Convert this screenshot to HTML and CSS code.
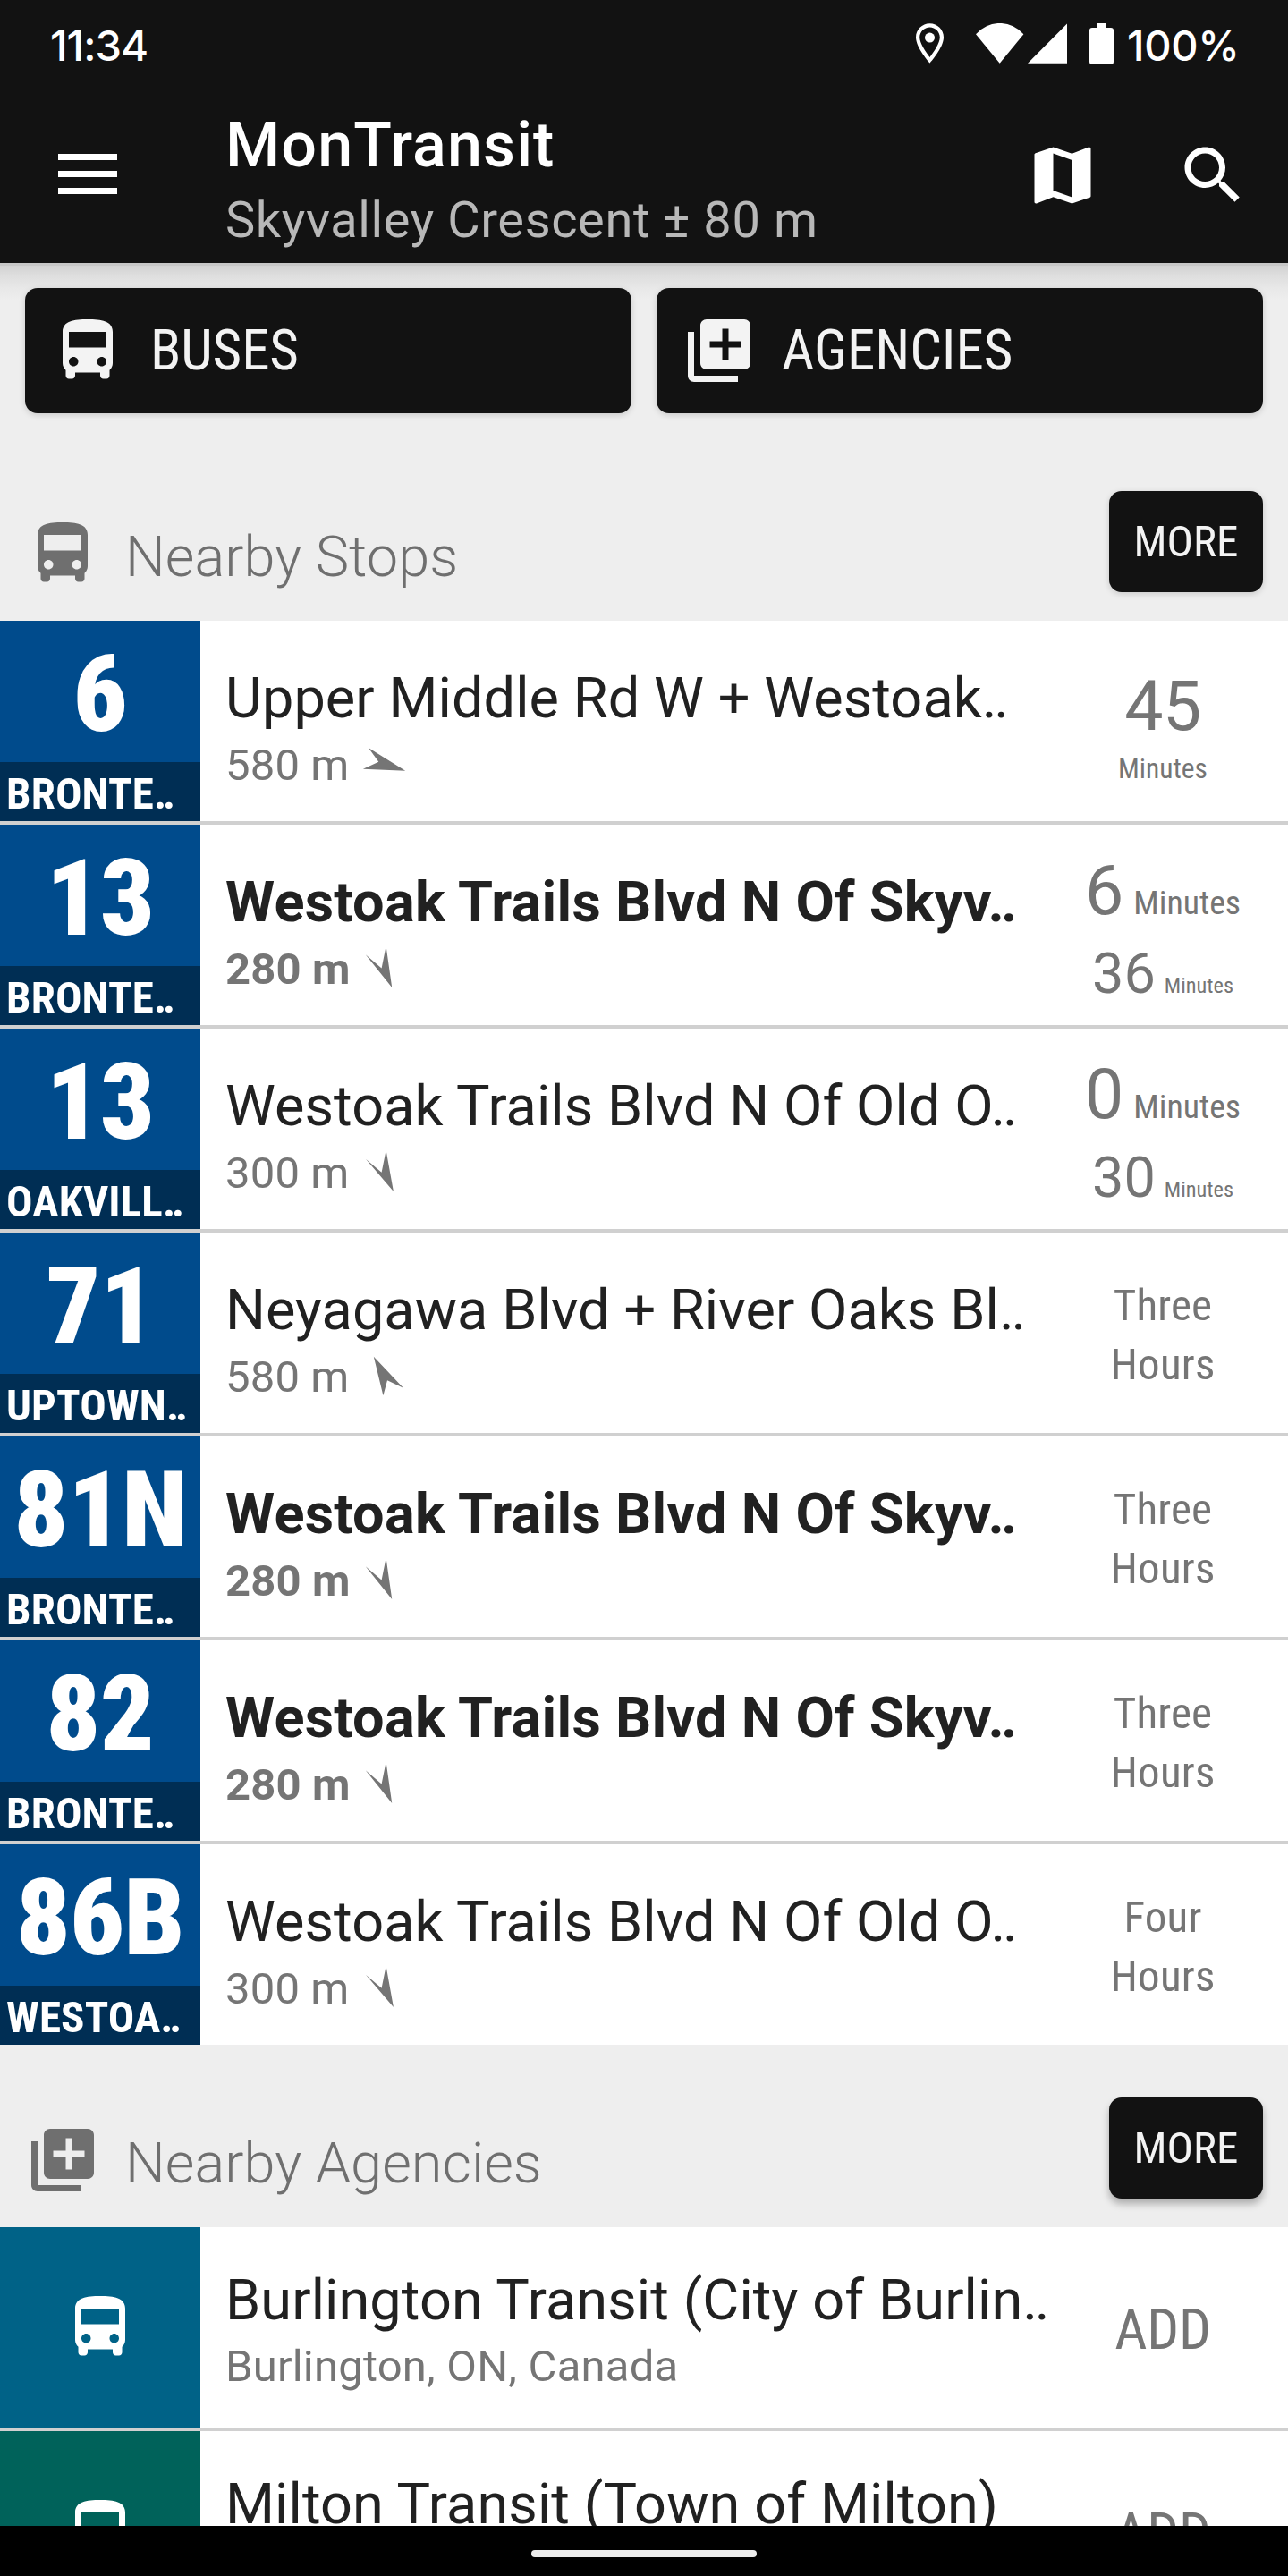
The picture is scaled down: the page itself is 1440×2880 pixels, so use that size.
FILE: index.html
```
<!DOCTYPE html>
<html lang="en">
<head>
<meta charset="utf-8">
<title>MonTransit</title>
<link rel="stylesheet" href="styles.css">
</head>
<body>
<svg class="defs" aria-hidden="true">
  <symbol id="bus" viewBox="0 0 24 24"><path d="M4 16c0 .88.39 1.67 1 2.22V20c0 .55.45 1 1 1h1c.55 0 1-.45 1-1v-1h8v1c0 .55.45 1 1 1h1c.55 0 1-.45 1-1v-1.780c.61-.55 1-1.340 1-2.220V6c0-3.500-3.580-4-8-4s-8 .5-8 4v10zm3.500 1c-.83 0-1.500-.67-1.500-1.500S6.670 14 7.500 14s1.500.67 1.500 1.500S8.330 17 7.500 17zm9 0c-.83 0-1.500-.67-1.500-1.500s.67-1.500 1.500-1.500 1.500.67 1.500 1.500-.67 1.500-1.500 1.500zM18 11H6V6h12v5z"/></symbol>
  <symbol id="library" viewBox="0 0 24 24"><path d="M4 6H2v14c0 1.100.9 2 2 2h14v-2H4V6zm16-4H8c-1.100 0-2 .9-2 2v12c0 1.100.9 2 2 2h12c1.100 0 2-.9 2-2V4c0-1.100-.9-2-2-2zm-1 9h-4v4h-2v-4H9V9h4V5h2v4h4v2z"/></symbol>
  <symbol id="dir-east" viewBox="0 0 56 50"><path d="M11.900 8 53.200 33.700 5.900 31.700 23.300 23.700z"/></symbol>
  <symbol id="dir-south" viewBox="0 0 56 50"><path d="M31.600 1.700 38.200 48 8.700 11.300 26.600 26.400z"/></symbol>
  <symbol id="dir-southeast" viewBox="0 0 56 50"><path d="M31.600 2 39.900 48 9.100 12 26.600 26.700z"/></symbol>
  <symbol id="dir-north" viewBox="0 0 56 50"><path d="M17.800 4.700 50.900 39.700 33 31.300 28.400 48.300z"/></symbol>
</svg>

<header class="top">
  <div class="status">
    <span class="clock">11:34</span>
    <svg class="st-pin" viewBox="5 2 14 20"><path d="M12 2C8.130 2 5 5.130 5 9c0 5.250 7 13 7 13s7-7.750 7-13c0-3.870-3.130-7-7-7zM6.900 9c0-2.820 2.280-5.100 5.100-5.100s5.100 2.280 5.100 5.100c0 2.880-3 7.300-5.100 10C9.920 16.310 6.900 11.850 6.900 9z"/><circle cx="12" cy="9.100" r="2.500"/></svg>
    <svg class="st-wifi" viewBox="0 0 54 45"><path d="M0 12.300A35 35 0 0 1 53.400 12.300L26.700 44.700z"/></svg>
    <svg class="st-cell" viewBox="0 0 44 45"><path d="M0 44.700 44 .5V44.700z"/></svg>
    <svg class="st-battery" viewBox="0 0 27 46"><path d="M8 0h11v5h5a3 3 0 0 1 3 3v35a3 3 0 0 1-3 3H3a3 3 0 0 1-3-3V8a3 3 0 0 1 3-3h5z"/></svg>
    <span class="charge">100%</span>
  </div>
  <div class="appbar">
    <div class="menu"><i></i><i></i><i></i></div>
    <div class="titles">
      <h1>MonTransit</h1>
      <p>Skyvalley Crescent ± 80 m</p>
    </div>
    <svg class="icon act-map" viewBox="0 0 24 24"><path d="M20.500 3l-.16.030L15 5.100 9 3 3.360 4.900c-.21.070-.36.250-.36.480V20.500c0 .28.220.5.5.5l.16-.03L9 18.900l6 2.100 5.640-1.900c.21-.07.360-.25.360-.48V3.500c0-.28-.22-.5-.5-.5zM15 19l-6-2.110V5l6 2.110V19z"/></svg>
    <svg class="icon act-search" viewBox="0 0 24 24"><path d="M15.500 14h-.79l-.28-.27C15.410 12.590 16 11.110 16 9.500 16 5.910 13.090 3 9.500 3S3 5.910 3 9.500 5.910 16 9.500 16c1.610 0 3.090-.59 4.230-1.570l.27.280v.79l5 4.990L20.490 19l-4.990-5zm-6 0C7.010 14 5 11.990 5 9.500S7.010 5 9.500 5 14 7.010 14 9.500 11.990 14 9.500 14z"/></svg>
  </div>
</header>

<main class="content">
  <nav class="modes">
    <a class="mode"><svg class="icon"><use href="#bus"/></svg>BUSES</a>
    <a class="mode"><svg class="icon"><use href="#library"/></svg>AGENCIES</a>
  </nav>

  <div class="section section-first">
    <svg class="icon"><use href="#bus"/></svg>
    <h2>Nearby Stops</h2>
    <a class="more">MORE</a>
  </div>
  <ul class="list">
    <li class="row">
      <div class="badge"><b>6</b><span>BRONTE‥</span></div>
      <div class="body"><p class="name">Upper Middle Rd W + Westoak‥</p><p class="sub"><span>580 m</span><svg><use href="#dir-east"/></svg></p></div>
      <div class="side single"><em>45</em><small>Minutes</small></div>
    </li>
    <li class="row near">
      <div class="badge"><b>13</b><span>BRONTE‥</span></div>
      <div class="body"><p class="name">Westoak Trails Blvd N Of Skyv‥</p><p class="sub"><span>280 m</span><svg><use href="#dir-south"/></svg></p></div>
      <div class="side double"><p class="next"><em>6</em><small>Minutes</small></p><p class="after"><em>36</em><small>Minutes</small></p></div>
    </li>
    <li class="row">
      <div class="badge"><b>13</b><span>OAKVILL‥</span></div>
      <div class="body"><p class="name">Westoak Trails Blvd N Of Old O‥</p><p class="sub"><span>300 m</span><svg><use href="#dir-southeast"/></svg></p></div>
      <div class="side double"><p class="next"><em>0</em><small>Minutes</small></p><p class="after"><em>30</em><small>Minutes</small></p></div>
    </li>
    <li class="row">
      <div class="badge"><b>71</b><span>UPTOWN‥</span></div>
      <div class="body"><p class="name">Neyagawa Blvd + River Oaks Bl‥</p><p class="sub"><span>580 m</span><svg><use href="#dir-north"/></svg></p></div>
      <div class="side hours">Three<br>Hours</div>
    </li>
    <li class="row near">
      <div class="badge"><b>81N</b><span>BRONTE‥</span></div>
      <div class="body"><p class="name">Westoak Trails Blvd N Of Skyv‥</p><p class="sub"><span>280 m</span><svg><use href="#dir-south"/></svg></p></div>
      <div class="side hours">Three<br>Hours</div>
    </li>
    <li class="row near">
      <div class="badge"><b>82</b><span>BRONTE‥</span></div>
      <div class="body"><p class="name">Westoak Trails Blvd N Of Skyv‥</p><p class="sub"><span>280 m</span><svg><use href="#dir-south"/></svg></p></div>
      <div class="side hours">Three<br>Hours</div>
    </li>
    <li class="row">
      <div class="badge"><b>86B</b><span>WESTOA‥</span></div>
      <div class="body"><p class="name">Westoak Trails Blvd N Of Old O‥</p><p class="sub"><span>300 m</span><svg><use href="#dir-southeast"/></svg></p></div>
      <div class="side hours">Four<br>Hours</div>
    </li>
  </ul>

  <div class="section">
    <svg class="icon"><use href="#library"/></svg>
    <h2>Nearby Agencies</h2>
    <a class="more raised">MORE</a>
  </div>
  <ul class="list">
    <li class="row agency">
      <div class="badge burlington"><svg class="icon"><use href="#bus"/></svg></div>
      <div class="body"><p class="name">Burlington Transit (City of Burlin‥</p><p class="sub place">Burlington, ON, Canada</p></div>
      <div class="side add">ADD</div>
    </li>
    <li class="row agency">
      <div class="badge milton"><svg class="icon"><use href="#bus"/></svg></div>
      <div class="body"><p class="name">Milton Transit (Town of Milton)</p></div>
      <div class="side add">ADD</div>
    </li>
  </ul>
</main>

<footer class="navbar"><div class="pill"></div></footer>
</body>
</html>
```
FILE: styles.css
```
* { box-sizing: border-box; margin: 0; padding: 0; }
body {
  display: flex;
  flex-direction: column;
  width: 1440px;
  height: 2880px;
  overflow: hidden;
  background: #eee;
  color: #212121;
  font-family: Roboto, "Liberation Sans", sans-serif;
}
svg { display: block; flex: none; fill: currentColor; }
.defs { position: absolute; width: 0; height: 0; }
.icon { width: 84px; height: 84px; }
ul { list-style: none; }
em { font-style: normal; }

/* Status bar and app bar */
.top { flex: none; height: 294px; background: #121212; color: #fff; }
.status { display: flex; height: 98px; padding: 26px 0 0 56px; }
.clock, .charge { font: 500 47px/50px Inter, "Liberation Sans", sans-serif; }
.clock { width: 968px; letter-spacing: -.9px; }
.charge { letter-spacing: -.3px; margin-left: 15px; }
.st-pin { width: 31px; height: 45px; }
.st-wifi { width: 54px; height: 45px; margin-left: 36px; }
.st-cell { width: 44px; height: 45px; margin-left: 4px; }
.st-battery { width: 27px; height: 46px; margin-left: 25px; }
.appbar { display: flex; height: 196px; }
.menu { width: 252px; padding: 74px 0 0 65px; display: flex; flex-direction: column; gap: 12px; }
.menu i { width: 66px; height: 7px; background: #fff; }
.titles { width: 894px; padding-top: 23px; white-space: nowrap; }
.titles h1 { font-size: 70px; line-height: 82px; font-weight: 500; letter-spacing: 1.1px; }
.titles p { margin-top: 10px; font-size: 56px; line-height: 66px; letter-spacing: .6px; color: #b8b8b8; }
.act-map { margin-top: 56px; }
.act-search { margin: 56px 0 0 84px; }

/* Scrolling content */
.content {
  flex: 1;
  min-height: 0;
  overflow: hidden;
  background: linear-gradient(#c7c7c7 0 3px, #d2d2d2 3px, #dedede 14px, #e8e8e8 28px, #eee 42px);
}
.modes { display: grid; grid-template-columns: 1fr 1fr; gap: 28px; padding: 28px 28px 0; }
.mode, .more {
  background: #121212;
  color: #f3f3f3;
  font-family: "Roboto Condensed", Roboto, sans-serif;
  border-radius: 14px;
  box-shadow: 0 2px 7px rgba(0, 0, 0, .16);
}
.mode { display: flex; gap: 28px; height: 140px; padding: 28px; font-size: 63px; line-height: 84px; letter-spacing: -.1px; }
.section { display: flex; height: 204px; padding: 59px 28px 32px; color: #6f6f6f; }
.section-first { margin-top: 28px; }
.section .icon { margin-top: 28px; }
.section h2 { flex: 1; margin: 51px 0 0 28px; font-size: 63px; line-height: 46px; font-weight: 300; letter-spacing: .06px; }
.more { width: 172px; height: 113px; font-size: 49px; line-height: 113px; text-align: center; }
.raised { box-shadow: 0 6px 9px rgba(0, 0, 0, .28); }

/* Rows */
.row { display: grid; grid-template-columns: 224px 936px 280px; height: 224px; background: #fff; }
.row + .row { height: 228px; border-top: 4px solid #d0d0d0; }
.badge { height: 224px; background: #004b8c; color: #fff; font-family: "Roboto Condensed", Roboto, sans-serif; font-weight: 700; }
.badge b { display: block; height: 158px; font-size: 119px; line-height: 166px; text-align: center; letter-spacing: -.4px; }
.badge span { display: block; height: 66px; padding-left: 7px; background: #002e54; font-size: 49px; line-height: 72px; letter-spacing: .15px; white-space: nowrap; }
.body { padding: 50px 0 0 28px; white-space: nowrap; }
.name { font-size: 63px; line-height: 73px; letter-spacing: .08px; }
.sub { display: flex; margin-top: 9px; font-size: 49px; line-height: 60px; letter-spacing: .15px; color: #757575; }
.sub span { width: 148px; }
.sub svg { width: 56px; height: 50px; margin-top: 2px; }
.near .name, .near .sub { font-weight: 700; }
.near .name { letter-spacing: .26px; }
.side { color: #757575; text-align: center; font-family: "Roboto Condensed", Roboto, sans-serif; }
.side em { font-family: Roboto, sans-serif; }
.single { padding-top: 51px; }
.single em { display: block; font-size: 77px; line-height: 90px; letter-spacing: -.5px; }
.single small { display: block; margin-top: 7px; font-size: 31.5px; line-height: 36px; }
.double { padding-top: 30px; }
.double p { display: flex; justify-content: center; align-items: baseline; height: 88px; line-height: 88px; }
.next { gap: 11px; }
.next em { font-size: 77px; }
.next small { font-size: 37.8px; }
.double .after { margin-top: 5px; gap: 10px; }
.after em { font-size: 63px; }
.after small { font-size: 24.3px; }
.hours { padding-top: 49px; font-size: 49px; line-height: 66px; letter-spacing: .2px; }
.agency .body { padding-top: 45px; }
.agency .name { letter-spacing: .1px; }
.agency .place { margin-top: 8px; letter-spacing: .2px; }
.agency .icon { margin: 0 auto; }
.agency .badge { padding-top: 70px; }
.agency .burlington { background: #006287; }
.agency .milton { background: #00625a; }
.add { padding-top: 3px; font-size: 63px; line-height: 224px; letter-spacing: -.3px; }

/* Gesture bar */
.navbar { flex: none; height: 56px; padding-top: 27px; background: #000; }
.pill { width: 252px; height: 8px; margin: 0 auto; border-radius: 4px; background: #ececec; }
```
